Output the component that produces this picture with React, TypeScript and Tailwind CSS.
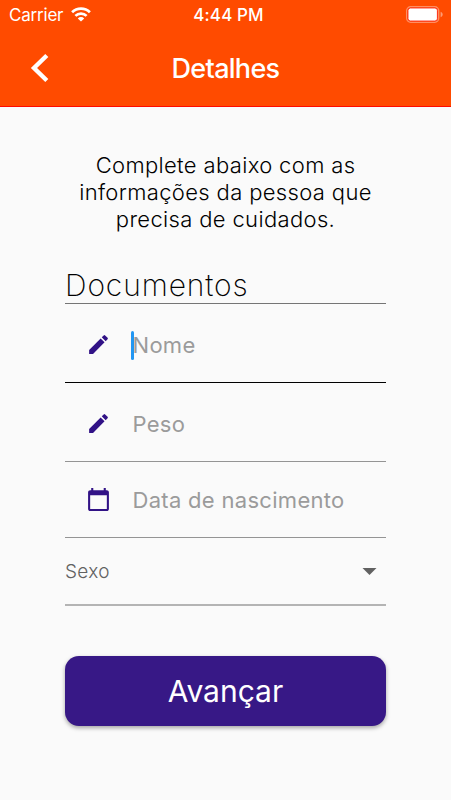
import { useState } from 'react';
import { clsx } from 'clsx';
import { MdCalendarToday, MdEdit } from 'react-icons/md';
import type { IconType } from 'react-icons';

interface FieldProps {
  icon: IconType;
  label: string;
  className: string;
  focused?: boolean;
  onFocus: () => void;
}

function StatusBar() {
  return (
    <div className="grid h-[29px] grid-cols-[1fr_auto_1fr] items-center pr-[8px] pl-[9px] text-[17px] leading-none text-white">
      <div className="flex items-center gap-[8px]">
        <span className="pt-px font-[370] tracking-[-0.2px]">Carrier</span>
        <svg width="20" height="15" viewBox="0 0 20 15" fill="none" stroke="currentColor" strokeWidth="2.7">
          <path d="M1.1 5.3a12.6 12.6 0 0 1 17.8 0" />
          <path d="M4.4 8.9a8 8 0 0 1 11.2 0" />
          <path d="M10 14.6 6.8 11.4a4.6 4.6 0 0 1 6.4 0z" fill="currentColor" stroke="none" />
        </svg>
      </div>
      <span className="pt-px pl-[5px] font-medium tracking-[0.1px]">4:44 PM</span>
      <svg className="justify-self-end" width="37" height="17" viewBox="0 0 37 17">
        <rect x="0.7" y="0.7" width="32" height="15.6" rx="4" fill="none" stroke="#ff8e62" strokeWidth="1.4" />
        <rect x="2" y="2" width="29.4" height="13" rx="2.5" fill="#fff" stroke="#ff1500" strokeWidth="0.8" />
        <path d="M34.6 5.8c1.4.6 2.1 1.6 2.1 2.7s-.7 2.1-2.1 2.7z" fill="#ff9a73" />
      </svg>
    </div>
  );
}

function Field({ icon: Icon, label, className, focused, onFocus }: FieldProps) {
  return (
    <div
      onClick={onFocus}
      className={clsx('flex items-center border-b pl-[21px]', focused ? 'border-black' : 'border-[#949494]', className)}
    >
      <Icon className="mb-px size-[25px] text-[#311286]" />
      <span className={clsx('ml-[20px] h-[29px] w-[3px] rounded-full', focused && 'bg-[#2196f3]')} />
      <span className="-ml-[1.5px] text-[22px] leading-none font-[370] tracking-[0.3px] text-[#9b9b9b]">{label}</span>
    </div>
  );
}

export default function App() {
  const [active, setActive] = useState('nome');

  return (
    <div className="min-h-[800px] w-[451px] bg-[#fafafa] font-['Inter',sans-serif]">
      <header className="h-[107px] border-b border-[#ff0a00] bg-[#ff4b00]">
        <StatusBar />
        <div className="grid h-[78px] grid-cols-[1fr_auto_1fr] items-center">
          <button className="ml-[30px] w-[20px]" aria-label="Voltar">
            <svg width="20" height="30" viewBox="0 0 20 30" fill="none" stroke="#fff" strokeWidth="4.4">
              <path d="M16.8 2.5 4 15l12.8 12.5" />
            </svg>
          </button>
          <h1 className="text-[27px] leading-none font-[550] tracking-[-0.7px] text-white">Detalhes</h1>
        </div>
      </header>

      <main className="px-[65px] pt-[45px]">
        <p className="text-center text-[22px] leading-[27px] font-[350] tracking-[0.35px] whitespace-nowrap text-black">
          Complete abaixo com as
          <br />
          informações da pessoa que
          <br />
          precisa de cuidados.
        </p>

        <h2 className="mt-[32px] h-[39px] border-b border-[#757575] text-[30px] leading-[40px] font-[250] tracking-[0.9px] text-black">
          Documentos
        </h2>

        <Field icon={MdEdit} label="Nome" className="h-[79px] pt-[4px]" focused={active === 'nome'} onFocus={() => setActive('nome')} />
        <Field icon={MdEdit} label="Peso" className="h-[79px] pt-[3px]" focused={active === 'peso'} onFocus={() => setActive('peso')} />
        <Field
          icon={MdCalendarToday}
          label="Data de nascimento"
          className="h-[76px]"
          focused={active === 'data'}
          onFocus={() => setActive('data')}
        />

        {/* Select */}
        <div className="flex h-[68px] items-center justify-between border-b-2 border-[#b4b4b4] pr-[9px]">
          <span className="text-[19px] leading-none font-[350] tracking-[0.3px] text-[#616161]">Sexo</span>
          <svg width="15" height="7" viewBox="0 0 15 7" fill="#616161">
            <path d="M0.5 0h14l-7 7z" />
          </svg>
        </div>

        <button className="mt-[50px] h-[70px] w-full rounded-[14px] bg-[#371886] text-[30px] leading-none text-white shadow-[0_2px_4px_rgba(0,0,0,0.35)]">
          Avançar
        </button>
      </main>
    </div>
  );
}
